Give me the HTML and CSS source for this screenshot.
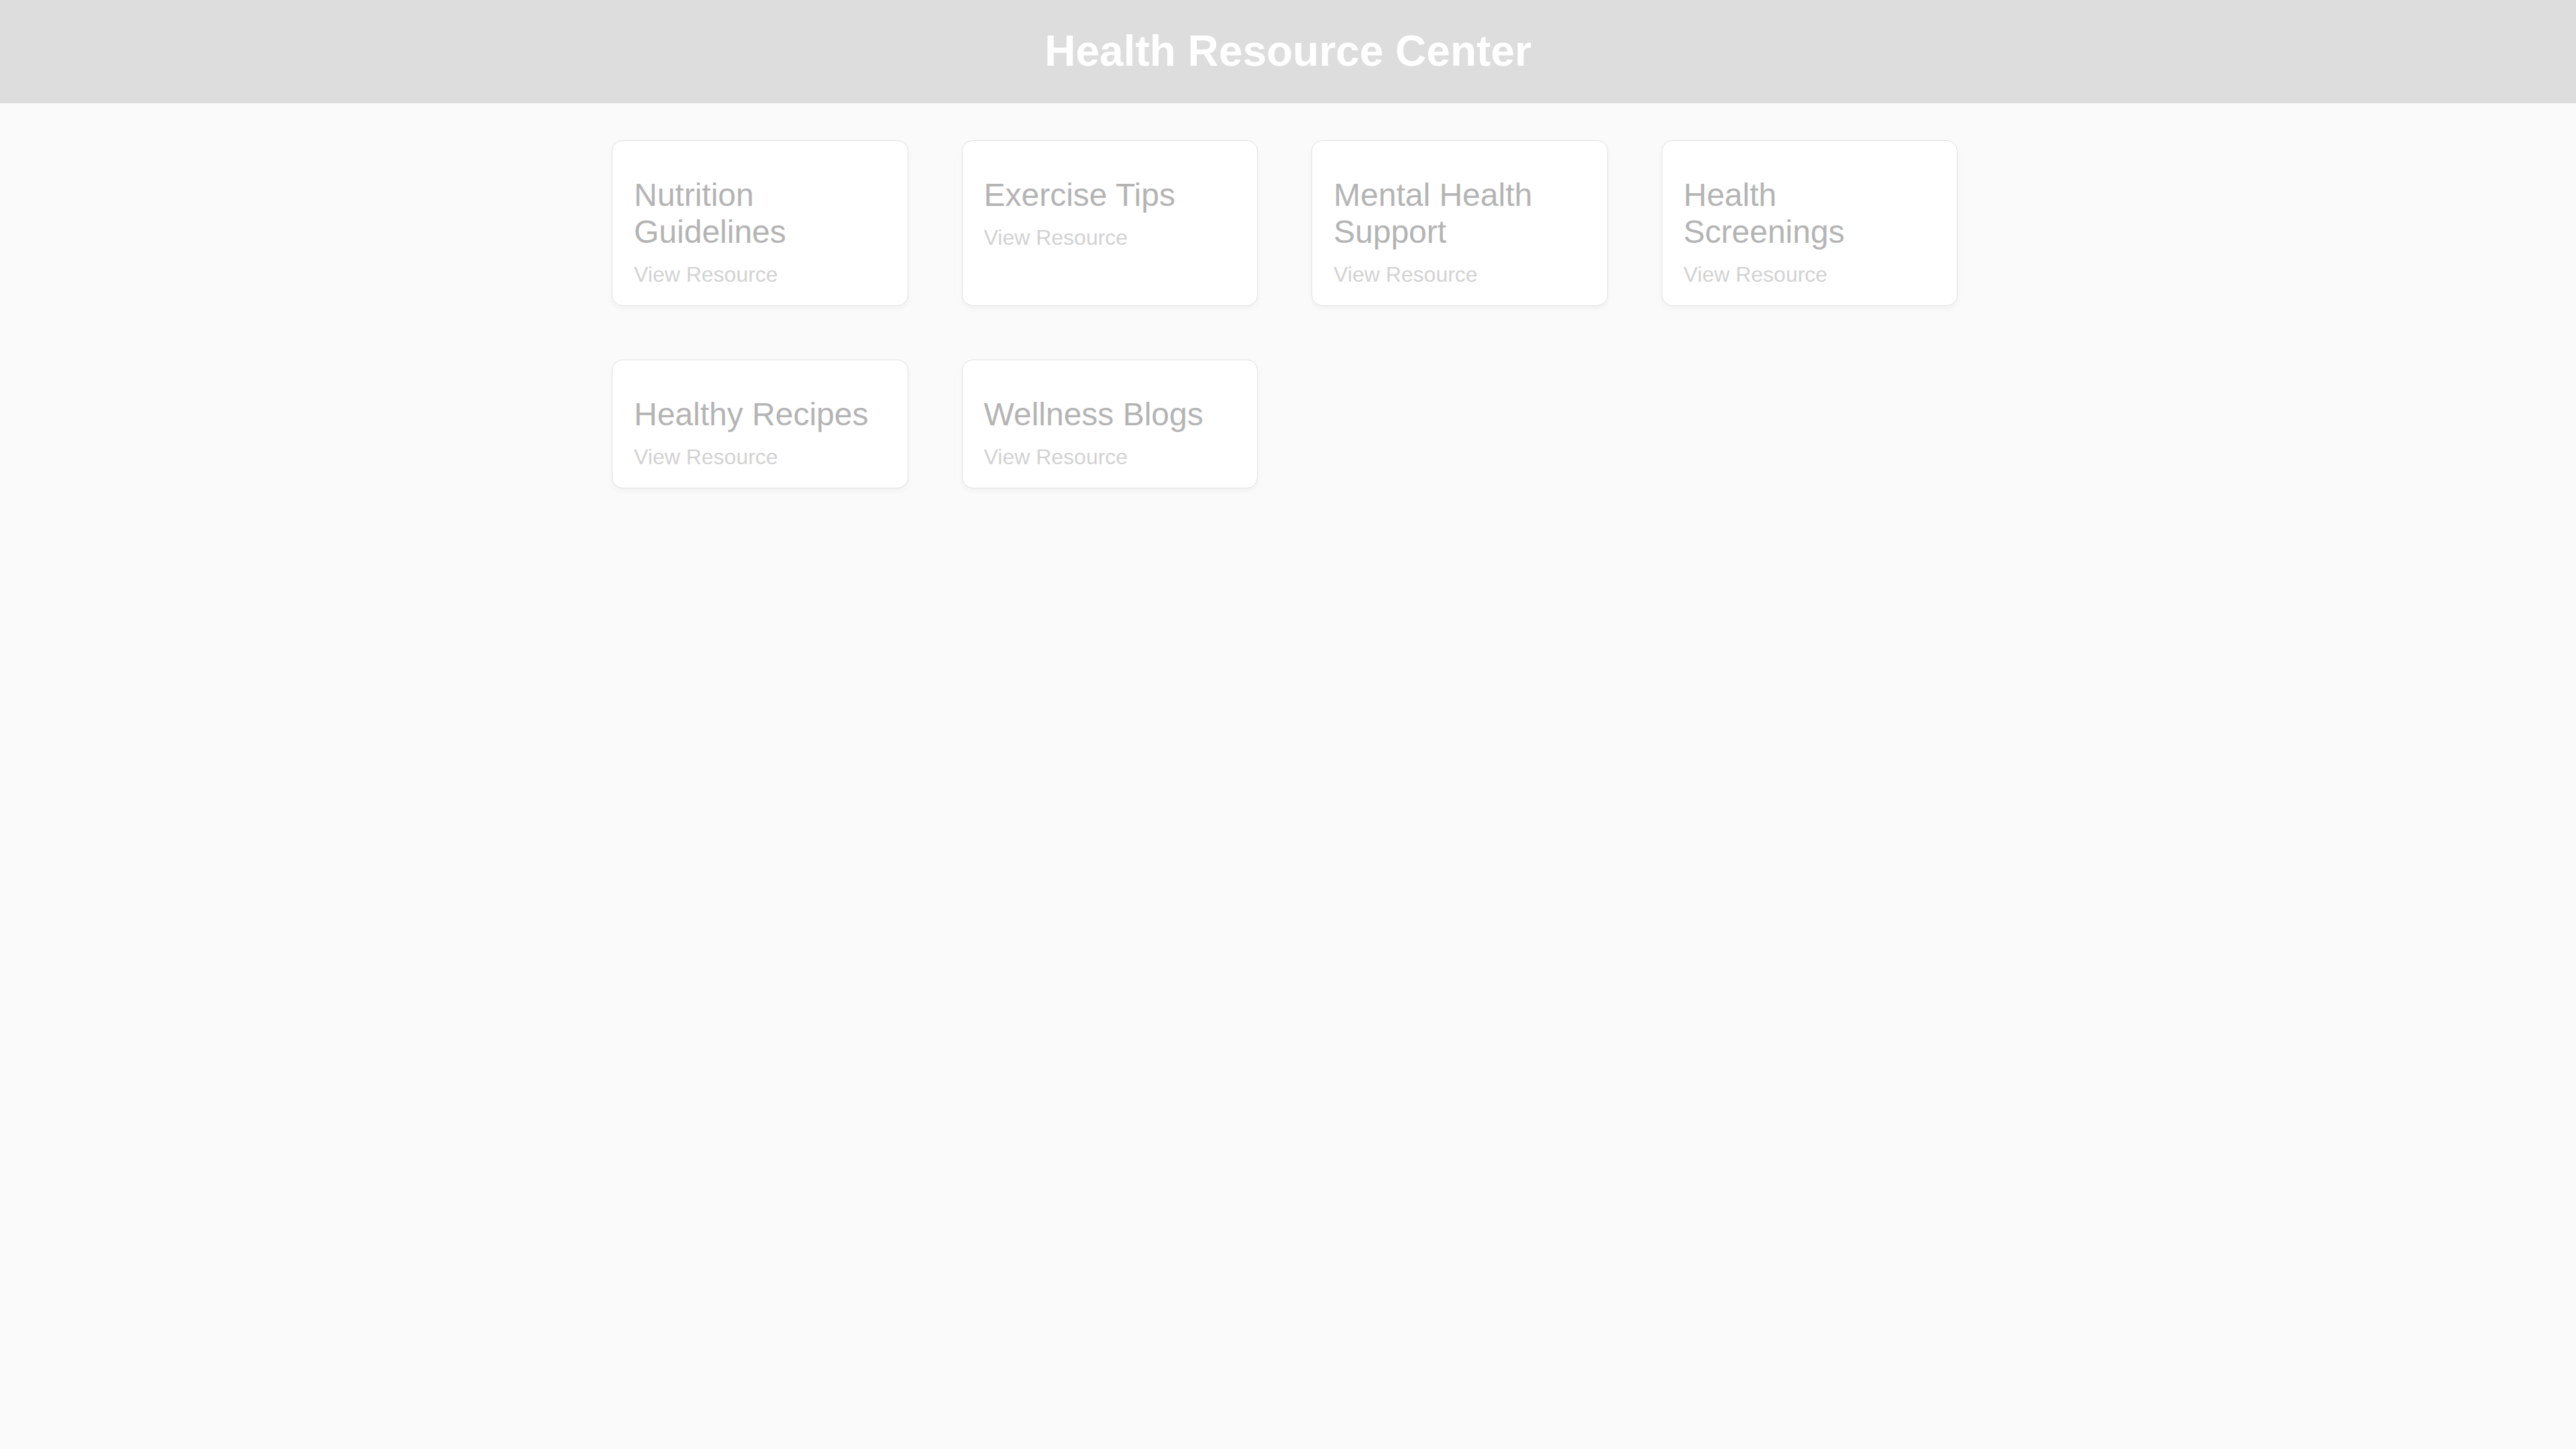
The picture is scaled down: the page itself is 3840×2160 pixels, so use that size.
FILE: index.html
```html
<!DOCTYPE html>
<html lang="en">
<head>
<meta charset="utf-8">
<title>Health Resource Center</title>
<link rel="stylesheet" href="styles.css">
</head>
<body>
<header class="site-header">
  <h1 class="site-title">Health Resource Center</h1>
</header>
<main class="resources">
  <div class="card">
    <h2 class="card-title">Nutrition Guidelines</h2>
    <a class="card-link" href="#">View Resource</a>
  </div>
  <div class="card">
    <h2 class="card-title">Exercise Tips</h2>
    <a class="card-link" href="#">View Resource</a>
  </div>
  <div class="card">
    <h2 class="card-title">Mental Health Support</h2>
    <a class="card-link" href="#">View Resource</a>
  </div>
  <div class="card">
    <h2 class="card-title">Health Screenings</h2>
    <a class="card-link" href="#">View Resource</a>
  </div>
  <div class="card">
    <h2 class="card-title">Healthy Recipes</h2>
    <a class="card-link" href="#">View Resource</a>
  </div>
  <div class="card">
    <h2 class="card-title">Wellness Blogs</h2>
    <a class="card-link" href="#">View Resource</a>
  </div>
</main>
</body>
</html>
```

FILE: styles.css
```css
html, body {
  margin: 0;
  padding: 0;
}

body {
  background: #fafafa;
  font-family: "Liberation Sans", Arial, sans-serif;
  min-height: 100vh;
}

.site-header {
  background: #dddddd;
  padding: 40px 0;
  text-align: center;
}

.site-title {
  margin: 0;
  font-size: 64px;
  line-height: 1.15;
  font-weight: bold;
  color: #ffffff;
}

.resources {
  box-sizing: border-box;
  width: 2016px;
  padding-right: 10px;
  margin: 55px auto 0;
  display: grid;
  grid-template-columns: repeat(4, 1fr);
  gap: 80px;
}

.card {
  background: #ffffff;
  border: 1px solid #e2e2e2;
  border-radius: 16px;
  box-shadow: 0 4px 8px rgba(0, 0, 0, 0.04);
  padding: 26px 32px 27px;
}

.card-title {
  margin: 27px 0 18px;
  font-size: 48px;
  line-height: 1.15;
  font-weight: normal;
  color: #b4b4b4;
}

.card-link {
  display: block;
  font-size: 32px;
  line-height: 1.15;
  color: #d2d2d2;
  text-decoration: none;
}
```
